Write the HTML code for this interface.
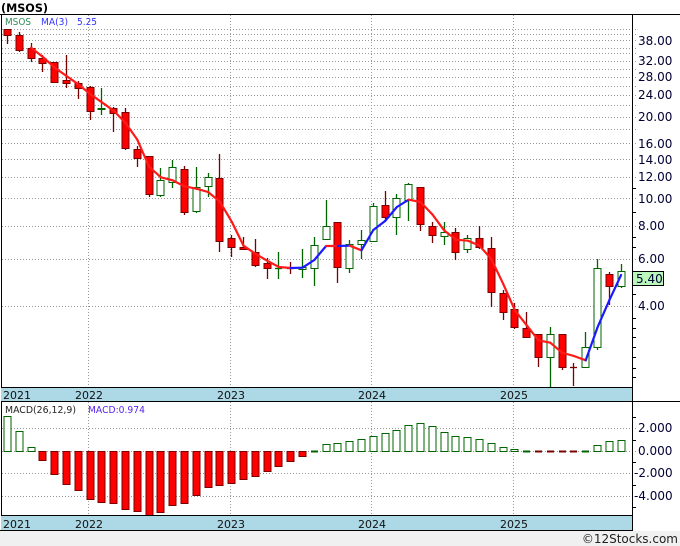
<!DOCTYPE html>
<html><head><meta charset="utf-8"><style>
html,body{margin:0;padding:0;background:#fff;}
svg{display:block;font-family:"DejaVu Sans","Liberation Sans",sans-serif;}
</style></head><body>
<svg id="s" width="680" height="546" xmlns="http://www.w3.org/2000/svg">
<rect x="0" y="0" width="680" height="546" fill="#fff"/>
<rect x="0" y="531" width="680" height="15" fill="#f0f0f0"/>
<text x="1" y="12" font-size="11.5" font-weight="bold" fill="#000" textLength="47" lengthAdjust="spacingAndGlyphs">(MSOS)</text>
<g id="grid" stroke="#999" stroke-width="1" stroke-dasharray="1,2"></g>
<g id="cand"></g>
<g id="macd"></g>
<g id="mag"></g>
<line x1="0" y1="14.5" x2="680" y2="14.5" stroke="#000"/>
<line x1="1.5" y1="14" x2="1.5" y2="531" stroke="#000"/>
<line x1="632.5" y1="14" x2="632.5" y2="531" stroke="#000"/>
<rect x="1" y="387" width="631" height="14" fill="#add8e6"/>
<line x1="1" y1="387.5" x2="632" y2="387.5" stroke="#000"/>
<line x1="1" y1="401.5" x2="680" y2="401.5" stroke="#000"/>
<rect x="1" y="516" width="631" height="14" fill="#add8e6"/>
<line x1="1" y1="515.5" x2="632" y2="515.5" stroke="#000"/>
<line x1="0" y1="530.5" x2="632" y2="530.5" stroke="#000"/>
<g font-size="11" fill="#111">
<text x="3" y="399">2021</text><text x="75" y="399">2022</text><text x="217" y="399">2023</text><text x="358" y="399">2024</text><text x="500" y="399">2025</text>
<text x="3" y="528">2021</text><text x="75" y="528">2022</text><text x="217" y="528">2023</text><text x="358" y="528">2024</text><text x="500" y="528">2025</text>
</g>
<g font-size="10">
<text x="5" y="25" fill="#2e8b57" textLength="26" lengthAdjust="spacingAndGlyphs">MSOS</text><text x="41" y="25" fill="#3333ff" textLength="27" lengthAdjust="spacingAndGlyphs">MA(3)</text><text x="77" y="25" fill="#3333ff" textLength="20" lengthAdjust="spacingAndGlyphs">5.25</text>
<text x="5" y="413" fill="#222" textLength="71" lengthAdjust="spacingAndGlyphs">MACD(26,12,9)</text><text x="88" y="413" fill="#5522ee" textLength="57" lengthAdjust="spacingAndGlyphs">MACD:0.974</text>
</g>
<g font-size="12" fill="#000033">
<text x="638" y="45">38.00</text><text x="638" y="65">32.00</text><text x="638" y="81">28.00</text><text x="638" y="99">24.00</text><text x="638" y="121">20.00</text><text x="638" y="148">16.00</text><text x="638" y="164">14.00</text><text x="638" y="181">12.00</text><text x="638" y="203">10.00</text><text x="638" y="230">8.00</text><text x="638" y="263">6.00</text><text x="638" y="310">4.00</text>
<text x="638" y="432">2.000</text><text x="638" y="455">0.000</text><text x="634" y="477">-2.000</text><text x="634" y="500">-4.000</text>
</g>
<rect x="632.5" y="271.5" width="31" height="14" fill="#bbf7bb" stroke="#000"/>
<text x="636" y="283" font-size="12" fill="#000033">5.40</text>
<text x="678" y="543" font-size="12" fill="#222" text-anchor="end">©12Stocks.com</text>
</svg>
<script>
var NS="http://www.w3.org/2000/svg";
function el(p,t,a){var e=document.createElementNS(NS,t);for(var k in a)e.setAttribute(k,a[k]);p.appendChild(e);return e;}
var g=document.getElementById('grid');
[29,34,40,48,53,61,69,77,86,95,105,117,129,143,159,177,198,226,259,306].forEach(function(y){el(g,'line',{x1:2,y1:y+.5,x2:636,y2:y+.5});});
[428,451,473,496].forEach(function(y){el(g,'line',{x1:2,y1:y+.5,x2:636,y2:y+.5});});
[88,230,371,513].forEach(function(x){el(g,'line',{x1:x+.5,y1:15,x2:x+.5,y2:387});el(g,'line',{x1:x+.5,y1:402,x2:x+.5,y2:515});});
var s=document.getElementById('s');
[188,212,237,247,294,318,328,337,347,357,368,377,417,440,462,485,507].forEach(function(y){el(s,'line',{x1:632,y1:y+.5,x2:636,y2:y+.5,stroke:'#000'});});
var C=[['r',29,35,29,44],['r',35,50,32,52],['r',48,58,43,62],['r',58,63,55,72],['r',62,82,62,83],['r',80,83,55,88],['r',83,88,81,99],['r',87,111,86,120],['g',108,109,88,115],['r',108,113,107,132],['r',112,148,108,150],['r',149,158,146,167],['r',156,194,156,197],['g',180,195,168,197],['g',167,182,160,188],['r',169,212,166,215],['g',187,211,167,213],['g',177,186,173,197],['r',178,241,154,252],['r',238,247,235,257],['r',247,249,237,250],['r',252,265,239,267],['r',263,268,258,279],['g',268,268,252,279],['r',268,268,262,274],['g',267,269,249,278],['g',245,268,237,286],['g',226,239,200,240],['r',222,267,222,283],['g',244,268,240,273],['g',240,244,230,259],['g',206,241,203,241],['r',205,217,191,220],['g',198,217,194,235],['g',184,200,183,221],['r',187,224,187,231],['r',226,235,222,243],['g',232,236,222,245],['r',232,252,228,260],['g',238,249,235,253],['r',238,247,226,249],['r',248,292,237,307],['r',293,312,290,320],['r',309,327,303,329],['r',328,337,312,337],['r',334,357,334,367],['g',334,357,327,387],['r',334,367,334,370],['r',367,367,363,386],['g',347,367,332,368],['g',268,347,259,350],['r',274,286,272,305],['g',271,286,264,288]];
var M=[416,431,447,460,474,484,490,499,502,503,509,511,515,512,505,503,495,487,485,483,479,476,471,466,461,456,451,444,443,441,439,436,433,430,425,423,426,432,436,437,439,443,447,449,450.5,452,452,452,452,450,445,441,440];
var cg=document.getElementById('cand'),mg=document.getElementById('macd');
function X(i){return 7+11.8*i;}
var closes=[];
C.forEach(function(c,i){var x=Math.round(X(i));var red=c[0]=='r';
 var col=red?'#7a0000':'#006400';
 el(cg,'line',{x1:x+.5,y1:c[3],x2:x+.5,y2:c[4],stroke:col,'stroke-width':1.3});
 var h=Math.max(c[2]-c[1],1);
 if(c[2]-c[1]<1){el(cg,'line',{x1:x-3,y1:c[1]+.5,x2:x+4,y2:c[1]+.5,stroke:col,'stroke-width':1.3});}
 else el(cg,'rect',{x:x-3,y:c[1]+.5,width:7,height:h,fill:red?'#ff0000':'#fff',stroke:col,'stroke-width':1});
 closes.push(red?c[2]:c[1]);
 var m=M[i];var y0=Math.min(m,451),y1=Math.max(m,451);
 var mr=m>451.5;
 if(y1-y0<1.5) el(mg,'line',{x1:x-3,y1:451.5,x2:x+4,y2:451.5,stroke:mr?'#7a0000':'#006400','stroke-width':2});
 else el(mg,'rect',{x:x-3,y:y0+.5,width:7,height:y1-y0,fill:mr?'#ff0000':'#fff',stroke:mr?'#7a0000':'#006400','stroke-width':1});
});
var ma=[];for(var i=2;i<closes.length;i++)ma.push([X(i)+.5,(closes[i]+closes[i-1]+closes[i-2])/3]);
var mag=document.getElementById('mag');
for(var j=1;j<ma.length;j++){var up=ma[j][1]<ma[j-1][1]-0.2;
 el(mag,'line',{x1:ma[j-1][0],y1:ma[j-1][1],x2:ma[j][0],y2:ma[j][1],stroke:up?'#1a1aff':'#ff1a1a','stroke-width':2.2,'stroke-linecap':'round'});}
</script>
</body></html>
